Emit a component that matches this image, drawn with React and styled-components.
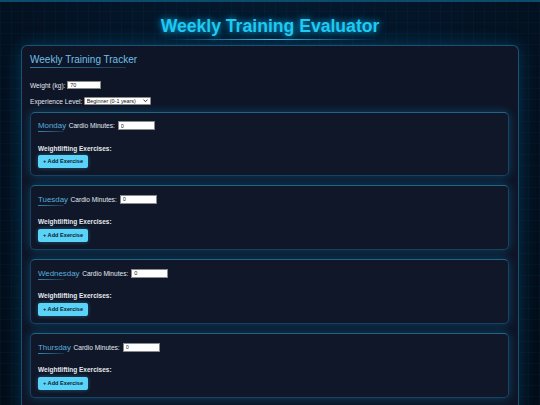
import React from "react";
import styled, { createGlobalStyle } from "styled-components";

const GlobalStyle = createGlobalStyle`
  html, body {
    margin: 0;
    padding: 0;
  }
  body {
    background-color: #030c18;
    background-image:
      linear-gradient(rgba(0, 190, 255, 0.035) 1px, transparent 1px),
      linear-gradient(90deg, rgba(0, 190, 255, 0.035) 1px, transparent 1px),
      radial-gradient(ellipse at 50% 0%, #05192d 0%, #041426 45%, #030c18 100%);
    background-size: 11px 11px, 11px 11px, 100% 100%;
    font-family: "Liberation Sans", Arial, sans-serif;
    font-size: 6.6px;
    color: #e2e8f0;
    min-height: 405px;
    overflow: hidden;
  }
`;

const TopBar = styled.div`
  height: 2px;
  background: #0d4b6d;
`;

const Header = styled.header`
  display: flex;
  justify-content: center;
  padding-top: 14px;
  margin-bottom: 9px;
`;

const Title = styled.h1`
  position: relative;
  margin: 0;
  font-size: 17.6px;
  line-height: 20px;
  font-weight: 700;
  color: #1fc9f2;
  text-shadow: 0 0 6px rgba(0, 200, 255, 0.75), 0 0 12px rgba(0, 180, 255, 0.35);

  &::after {
    content: "";
    position: absolute;
    left: 5px;
    right: 2px;
    bottom: -4px;
    height: 1px;
    background: linear-gradient(90deg, transparent, rgba(60, 200, 240, 0.9) 50%, transparent);
  }
`;

const Panel = styled.main`
  margin: 0 21px;
  padding: 7.5px 9px 14px 8px;
  background: #0e1526;
  border: 1px solid rgba(40, 140, 190, 0.5);
  border-radius: 6px;
  box-shadow: 0 0 18px rgba(0, 170, 240, 0.25);
`;

const PanelTitle = styled.h2`
  position: relative;
  display: block;
  width: fit-content;
  margin: 0;
  padding-bottom: 2px;
  font-size: 10px;
  line-height: 12px;
  font-weight: 400;
  color: #6fc0e8;

  &::after {
    content: "";
    position: absolute;
    left: 0;
    bottom: 0;
    width: 90%;
    height: 1px;
    background: linear-gradient(90deg, rgba(50, 150, 200, 0.8), rgba(50, 150, 200, 0.3));
  }
`;

const FormRow = styled.div`
  display: flex;
  align-items: center;
  gap: ${(p) => p.$gap || 1.8}px;
  margin-top: ${(p) => p.$top}px;
  height: 9px;
`;

const Label = styled.label`
  font-size: 6.6px;
  line-height: 9px;
  color: #e2e8f0;
  white-space: nowrap;
`;

const TextInput = styled.input`
  box-sizing: border-box;
  width: ${(p) => p.$w}px;
  height: 8.5px;
  margin: 0;
  padding: 0 2px;
  font-family: "Liberation Sans", Arial, sans-serif;
  font-size: 5.5px;
  color: #222;
  background: #fff;
  border: 1px solid #8a8a8a;
  border-radius: 0;
  outline: none;
`;

const SelectWrap = styled.div`
  position: relative;
  width: 67px;
  height: 8.5px;
`;

const Select = styled.select`
  appearance: none;
  -webkit-appearance: none;
  box-sizing: border-box;
  display: block;
  width: 100%;
  height: 100%;
  margin: 0;
  padding: 0 8px 0 1.5px;
  font-family: "Liberation Sans", Arial, sans-serif;
  font-size: 5.4px;
  line-height: 6.5px;
  color: #111;
  background: #fff;
  border: 1px solid #8a8a8a;
  border-radius: 1px;
  outline: none;
`;

const Chevron = styled.svg`
  position: absolute;
  right: 3px;
  top: 2.6px;
  width: 5px;
  height: 3.5px;
  pointer-events: none;
`;

const DayList = styled.div`
  display: flex;
  flex-direction: column;
  gap: 9px;
  margin-top: 6px;
`;

const DayCard = styled.section`
  padding: 8.5px 8px 7.7px 7px;
  background: #0f1729;
  border: 1px solid rgba(40, 130, 180, 0.42);
  border-top-color: rgba(50, 150, 200, 0.6);
  border-radius: 5px;
  box-shadow: 0 0 10px rgba(0, 160, 230, 0.34);
`;

const DayHeader = styled.div`
  display: flex;
  align-items: center;
  height: 9px;
`;

const DayName = styled.h3`
  position: relative;
  margin: 0 2.6px 0 0;
  font-size: 7.9px;
  line-height: 9px;
  font-weight: 400;
  color: #5aaedb;

  &::after {
    content: "";
    position: absolute;
    left: 0;
    bottom: -2px;
    width: 26px;
    height: 1px;
    background: linear-gradient(90deg, rgba(50, 150, 200, 0.9), rgba(50, 150, 200, 0.2));
  }
`;

const CardioLabel = styled(Label)`
  margin-right: 3px;
`;

const SectionLabel = styled.div`
  margin-top: 14.5px;
  font-size: 6.5px;
  line-height: 8px;
  font-weight: 700;
  color: #e4e8ee;
`;

const AddButton = styled.button`
  display: block;
  height: 12.7px;
  margin-top: 2.6px;
  padding: 0 5px;
  font-family: "Liberation Sans", Arial, sans-serif;
  font-size: 5.6px;
  font-weight: 700;
  color: #0b1a2a;
  background: #5bd3f8;
  border: none;
  border-radius: 2px;
  box-shadow: 0 0 4px rgba(80, 210, 250, 0.35);
  cursor: pointer;
`;

const days = ["Monday", "Tuesday", "Wednesday", "Thursday"];

export default function App() {
  return (
    <>
      <GlobalStyle />
      <TopBar />
      <Header>
        <Title>Weekly Training Evaluator</Title>
      </Header>
      <Panel>
        <PanelTitle>Weekly Training Tracker</PanelTitle>
        <FormRow $top={13}>
          <Label htmlFor="weight">Weight (kg):</Label>
          <TextInput id="weight" $w={34} defaultValue="70" />
        </FormRow>
        <FormRow $top={7}>
          <Label htmlFor="level">Experience Level:</Label>
          <SelectWrap>
            <Select id="level" defaultValue="beginner">
              <option value="beginner">Beginner (0-1 years)</option>
              <option value="intermediate">Intermediate (1-3 years)</option>
              <option value="advanced">Advanced (3+ years)</option>
            </Select>
            <Chevron viewBox="0 0 10 7">
              <path d="M1 1.2 L5 5.4 L9 1.2" fill="none" stroke="#222" strokeWidth="1.8" />
            </Chevron>
          </SelectWrap>
        </FormRow>
        <DayList>
          {days.map((d) => (
            <DayCard key={d}>
              <DayHeader>
                <DayName>{d}</DayName>
                <CardioLabel>Cardio Minutes:</CardioLabel>
                <TextInput $w={37} defaultValue="0" />
              </DayHeader>
              <SectionLabel>Weightlifting Exercises:</SectionLabel>
              <AddButton>+ Add Exercise</AddButton>
            </DayCard>
          ))}
        </DayList>
      </Panel>
    </>
  );
}
